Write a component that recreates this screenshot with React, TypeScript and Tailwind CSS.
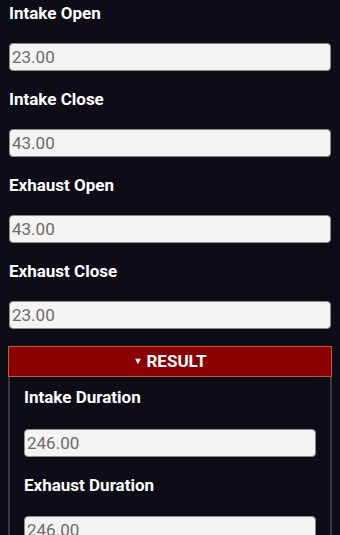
import { useState } from "react";

const font = { fontFamily: "Roboto, 'Liberation Sans', sans-serif" };

const labelCls = "h-[28px] flex items-center text-[17px] font-bold text-white";
const inputCls =
  "block w-full h-[28px] rounded-[4px] bg-[#f3f3f3] border border-[#8a8a8a] px-[2px] text-[17px] text-[#6b6b6b] outline-none";

const Field = ({ label, value, first }: { label: string; value: string; first?: boolean }) => (
  <div className={first ? "" : "mt-[15px]"}>
    <div className={labelCls}>{label}</div>
    <input readOnly value={value} className={`mt-[15px] ${inputCls}`} style={font} />
  </div>
);

export default function App() {
  const [open, setOpen] = useState(true);

  const inputs = [
    { label: "Intake Open", value: "23.00" },
    { label: "Intake Close", value: "43.00" },
    { label: "Exhaust Open", value: "43.00" },
    { label: "Exhaust Close", value: "23.00" },
  ];

  return (
    <div className="w-[340px] h-[535px] overflow-hidden bg-[#0e0c17] px-[9px]" style={font}>
      {inputs.map((f, i) => (
        <Field key={f.label} label={f.label} value={f.value} first={i === 0} />
      ))}

      {/* Result section */}
      <div className="mt-[17px] -mx-[1px]">
        <button
          onClick={() => setOpen(!open)}
          className="w-full h-[31px] flex items-center justify-center gap-[4px] bg-[#8b0000] border border-[#b8651b] text-white text-[17px] font-bold"
          style={font}
        >
          <span className="text-[9px] leading-none">▼</span>
          RESULT
        </button>
        {open && (
          <div className="border-x-2 border-[#3a3a3d] px-[14px] pt-[7px] pb-4">
            <div className={labelCls}>Intake Duration</div>
            <input readOnly value="246.00" className={`mt-[17px] ${inputCls}`} style={font} />
            <div className={`mt-[15px] ${labelCls}`}>Exhaust Duration</div>
            <input readOnly value="246.00" className={`mt-[16px] ${inputCls}`} style={font} />
          </div>
        )}
      </div>
    </div>
  );
}
